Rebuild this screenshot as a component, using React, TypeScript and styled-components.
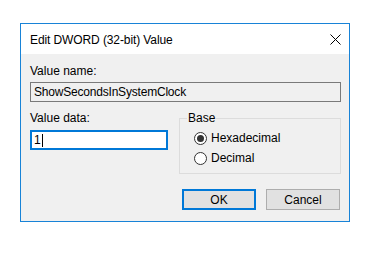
import styled, { createGlobalStyle } from 'styled-components';

const GlobalStyle = createGlobalStyle`
  html, body {
    margin: 0;
    background: #ffffff;
  }
  body {
    font-family: "Liberation Sans", Arial, sans-serif;
    font-size: 12px;
    color: #000000;
  }
`;

const Dialog = styled.div`
  box-sizing: border-box;
  width: 330px;
  height: 199px;
  margin: 23px 0 0 20px;
  border: 1px solid #1883d7;
  background: #f0f0f0;
  display: flex;
  flex-direction: column;
`;

const TitleBar = styled.div`
  height: 30px;
  background: #ffffff;
  display: flex;
  align-items: center;
  justify-content: space-between;
  padding: 0 4px 0 9px;
`;

const Title = styled.span`
  font-size: 12px;
  line-height: 14px;
  letter-spacing: -0.1px;
  padding-top: 1px;
`;

const CloseButton = styled.button`
  width: 20px;
  height: 20px;
  border: none;
  background: transparent;
  padding: 0;
  display: flex;
  align-items: center;
  justify-content: center;
`;

const Body = styled.div`
  flex: 1;
  padding: 0 8px 0 9px;
  display: flex;
  flex-direction: column;
`;

const Label = styled.div<{ $top?: number }>`
  line-height: 14px;
  margin-top: ${(p) => p.$top ?? 0}px;
`;

const NameBox = styled.div`
  box-sizing: border-box;
  height: 20px;
  margin-top: 4px;
  border: 1px solid #7a7a7a;
  background: #f0f0f0;
  padding: 0 3px;
  display: flex;
  align-items: center;
  letter-spacing: -0.2px;
`;

const DataRow = styled.div`
  display: grid;
  grid-template-columns: 138px 1fr;
  column-gap: 11px;
  margin-top: 9px;
`;

const DataInput = styled.div`
  box-sizing: border-box;
  height: 20px;
  margin-top: 5px;
  border: 2px solid #0078d7;
  background: #ffffff;
  padding: 0 2px;
  display: flex;
  align-items: center;
`;

const Caret = styled.span`
  display: inline-block;
  width: 1px;
  height: 13px;
  background: #000000;
  margin-left: 1px;
`;

const Group = styled.fieldset`
  margin: 0;
  padding: 6px 0 10px 14px;
  height: 63px;
  box-sizing: border-box;
  border: 1px solid #dcdcdc;
  display: flex;
  flex-direction: column;
  gap: 6px;
`;

const Legend = styled.legend`
  padding: 0 1px;
  margin-left: -7px;
  line-height: 14px;
`;

const RadioRow = styled.label`
  display: flex;
  align-items: center;
  gap: 4px;
  line-height: 14px;
`;

const RadioCircle = styled.span<{ $checked?: boolean }>`
  box-sizing: border-box;
  width: 13px;
  height: 13px;
  border-radius: 50%;
  border: 1px solid #333333;
  background: #ffffff;
  display: flex;
  align-items: center;
  justify-content: center;
  &::after {
    content: '';
    width: 7px;
    height: 7px;
    border-radius: 50%;
    background: ${(p) => (p.$checked ? '#333333' : 'transparent')};
  }
`;

const ButtonRow = styled.div`
  display: flex;
  justify-content: flex-end;
  gap: 10px;
  margin-top: 15px;
  margin-right: 1px;
`;

const Button = styled.button<{ $default?: boolean }>`
  box-sizing: border-box;
  width: 74px;
  height: 21px;
  padding: 0;
  font-family: inherit;
  font-size: 12px;
  color: #000000;
  background: #e1e1e1;
  border: ${(p) => (p.$default ? '2px solid #0078d7' : '1px solid #adadad')};
`;

export default function App() {
  return (
    <>
      <GlobalStyle />
      <Dialog>
        <TitleBar>
          <Title>Edit DWORD (32-bit) Value</Title>
          <CloseButton aria-label="Close">
            <svg width="11" height="11" viewBox="0 0 11 11">
              <path d="M0.5 0.5 L10.5 10.5 M10.5 0.5 L0.5 10.5" stroke="#000" strokeWidth="1" fill="none" />
            </svg>
          </CloseButton>
        </TitleBar>
        <Body>
          <Label $top={10}>Value name:</Label>
          <NameBox>ShowSecondsInSystemClock</NameBox>
          <DataRow>
            <div>
              <Label>Value data:</Label>
              <DataInput>
                1<Caret />
              </DataInput>
            </div>
            <Group>
              <Legend>Base</Legend>
              <RadioRow>
                <RadioCircle $checked />
                Hexadecimal
              </RadioRow>
              <RadioRow>
                <RadioCircle />
                Decimal
              </RadioRow>
            </Group>
          </DataRow>
          <ButtonRow>
            <Button $default>OK</Button>
            <Button>Cancel</Button>
          </ButtonRow>
        </Body>
      </Dialog>
    </>
  );
}
